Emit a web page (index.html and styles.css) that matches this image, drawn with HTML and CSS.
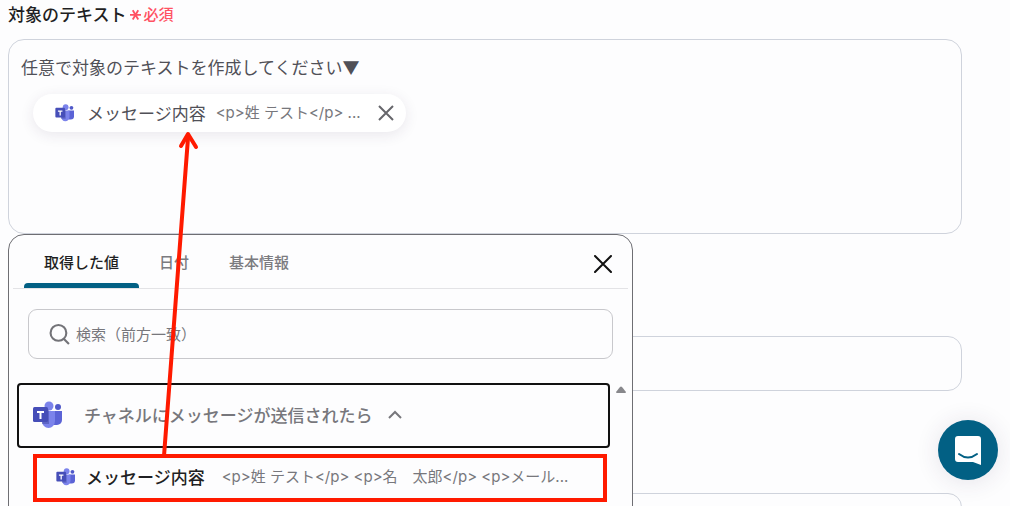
FILE: index.html
```html
<!DOCTYPE html>
<html lang="ja">
<head>
<meta charset="UTF-8">
<meta name="viewport" content="width=device-width, initial-scale=1.0">
<title>対象のテキスト</title>
<link rel="stylesheet" href="styles.css">
</head>
<body>

<!-- Teams icon, shared by the chip and the list -->
<svg class="sprite" aria-hidden="true">
    <symbol id="teams" viewBox="0 0 30 28">
        <circle cx="25" cy="6" r="3" fill="#5059c9"/>
        <path d="M20 10h9v9a5 5 0 0 1-5 5h-4z" fill="#5b63d6"/>
        <circle cx="16" cy="5" r="4.500" fill="#7b83eb"/>
        <path d="M9 10h13v10a6.500 7 0 0 1-13 0z" fill="#7b83eb"/>
        <path d="M9 8h5a2 2 0 0 1 2 2v13h-7z" fill="#3f469f" opacity=".5"/>
        <rect x="0" y="6" width="15" height="15" rx="1.500" fill="#464eb8"/>
        <path d="M4 10h7v2H8.500v6h-2v-6H4z" fill="#fff"/>
    </symbol>
</svg>

<main class="page">
    <div class="field-label">
        <span id="targetLabel" class="label-text">対象のテキスト</span>
        <svg class="asterisk" viewBox="0 0 12 12" aria-hidden="true"><path d="M0 7h12M3 2l6 10M9 2L3 12"/></svg>
        <span class="required">必須</span>
    </div>

    <div class="editor-wrap">
        <div class="editor" contenteditable="true" role="textbox" aria-multiline="true" aria-labelledby="targetLabel" spellcheck="false">
            <div class="editor-line">任意で対象のテキストを作成してください▼</div>
            <div class="chip" contenteditable="false">
                <svg class="teams-small" aria-hidden="true"><use href="#teams"/></svg>
                <span class="chip-name">メッセージ内容</span>
                <span class="chip-value">&lt;p&gt;姓 テスト&lt;/p&gt; ...</span>
                <button class="chip-remove" type="button" aria-label="削除">
                    <svg viewBox="0 0 16 16"><path d="M1 1l14 14M15 1L1 15"/></svg>
                </button>
            </div>
        </div>

        <!-- Value picker -->
        <div class="picker">
            <div class="tabs" role="tablist">
                <button class="tab active" type="button" role="tab" aria-selected="true">取得した値</button>
                <button class="tab" type="button" role="tab" aria-selected="false">日付</button>
                <button class="tab" type="button" role="tab" aria-selected="false">基本情報</button>
                <button class="picker-close" type="button" aria-label="閉じる">
                    <svg viewBox="0 0 18 18"><path d="M1 1l16 16M17 1L1 17"/></svg>
                </button>
            </div>

            <label class="search">
                <svg viewBox="0 0 20 20" aria-hidden="true"><circle cx="9" cy="8.500" r="7.500"/><path d="M14 14l5 5"/></svg>
                <input type="text" placeholder="検索（前方一致）" aria-label="検索（前方一致）">
            </label>

            <div class="results">
                <div class="result-list">
                    <button class="group" type="button" aria-expanded="true">
                        <svg class="teams-large" aria-hidden="true"><use href="#teams"/></svg>
                        <span>チャネルにメッセージが送信されたら</span>
                        <svg class="chevron" viewBox="0 0 14 9" aria-hidden="true"><path d="M1 8l6-6 6 6"/></svg>
                    </button>
                    <button class="item highlighted" type="button">
                        <svg class="teams-small" aria-hidden="true"><use href="#teams"/></svg>
                        <span class="item-name">メッセージ内容</span>
                        <span class="item-value">&lt;p&gt;姓 テスト&lt;/p&gt; &lt;p&gt;名　太郎&lt;/p&gt; &lt;p&gt;メール...</span>
                    </button>
                </div>
                <div class="scroll-track">
                    <svg class="scroll-up" viewBox="0 0 10 8" aria-hidden="true"><path d="M4 1q1-1 2 0l4 5q0 1-1 1H1q-1 0-1-1z"/></svg>
                </div>
            </div>
        </div>

        <!-- Arrow from the list item to the chip -->
        <svg class="arrow" viewBox="0 0 60 330" aria-hidden="true">
            <path d="M14 328L38 10"/>
            <path d="M31 18L38 6l8 13"/>
        </svg>
    </div>

    <input class="text-field" type="text" aria-label="入力1">
    <input class="text-field" type="text" aria-label="入力2">
</main>

<button class="chat" type="button" aria-label="チャットを開く">
    <svg viewBox="0 0 28 32">
        <path d="M4 2h20a3 3 0 0 1 3 3v26l-8-3H4a3 3 0 0 1-3-3V5a3 3 0 0 1 3-3z" fill="#fff"/>
        <path d="M5 20q9 7 18 0" fill="none" stroke="#026084" stroke-width="2" stroke-linecap="round"/>
    </svg>
</button>

</body>
</html>
```
FILE: styles.css
```css
* {
    box-sizing: border-box;
}

body {
    margin: 0;
    background-color: #fdfdfe;
    color: #1f1f23;
    font-family: "Noto Sans CJK JP", "Noto Sans", sans-serif;
    font-size: 15px;
    line-height: 24px;
}

button,
input {
    font: inherit;
    color: inherit;
}

button {
    padding: 0;
    border: none;
    background: none;
    cursor: pointer;
}

svg {
    flex: none;
}

.sprite {
    position: absolute;
    width: 0;
    height: 0;
}

.page {
    height: 100vh;
    overflow: hidden;
    padding: 2px 48px 0 8px;
}

/* Label */
.field-label {
    display: flex;
    align-items: center;
    gap: 3px;
    height: 24px;
    margin-bottom: 13px;
}

.label-text {
    font-size: 17px;
    font-weight: 500;
}

.asterisk {
    width: 11px;
    height: 12px;
    fill: none;
    stroke: #ff5263;
    stroke-width: 2;
}

.required {
    color: #ff5263;
    font-weight: 500;
}

/* Editor */
.editor-wrap {
    position: relative;
    margin-bottom: 102px;
}

.editor {
    min-height: 195px;
    padding: 15px 12px;
    border: 1px solid #cfd3dc;
    border-radius: 16px;
    color: #505057;
    font-size: 17px;
    outline: none;
}

.chip {
    display: inline-flex;
    align-items: center;
    height: 38px;
    margin: 15px 12px;
    padding: 0 12px 0 22px;
    border-radius: 19px;
    background-color: #fff;
    box-shadow: 0 3px 14px rgba(60, 40, 80, 0.1);
}

.teams-small {
    width: 20px;
    height: 18px;
}

.chip-name {
    margin: 0 10px 0 12px;
}

.chip-value {
    color: #77777c;
    font-family: Inter, "Noto Sans CJK JP", sans-serif;
    font-size: 15px;
}

.chip-remove {
    display: flex;
    margin-left: 17px;
}

.chip-remove svg {
    width: 16px;
    height: 16px;
    fill: none;
    stroke: #66666b;
    stroke-width: 2;
}

/* Picker */
.picker {
    position: absolute;
    top: 195px;
    left: 0;
    width: 625px;
    height: 400px;
    border: 1px solid #6e6e73;
    border-radius: 16px;
    background-color: #fdfdfe;
}

.tabs {
    display: flex;
    height: 54px;
    margin: 0 4px;
    padding: 0 16px 0 11px;
    border-bottom: 1px solid #e3e3e6;
}

.tab {
    position: relative;
    padding: 0 20px;
    color: #7b7b80;
    font-weight: 500;
}

.tab.active {
    color: #1f1f23;
}

.tab.active::after {
    content: "";
    position: absolute;
    right: 0;
    bottom: 0;
    left: 0;
    height: 5px;
    border-radius: 4px 4px 0 0;
    background-color: #026084;
}

.picker-close {
    display: flex;
    align-items: center;
    margin-left: auto;
    padding-top: 5px;
}

.picker-close svg {
    width: 18px;
    height: 18px;
    fill: none;
    stroke: #111;
    stroke-width: 2;
    stroke-linecap: round;
}

.search {
    display: flex;
    align-items: center;
    gap: 6px;
    height: 50px;
    margin: 20px 19px 24px;
    padding: 0 20px;
    border: 1px solid #c8c8cc;
    border-radius: 9px;
}

.search svg {
    width: 21px;
    height: 21px;
    fill: none;
    stroke: #737378;
    stroke-width: 2;
}

.search input {
    flex: 1;
    padding: 0;
    border: none;
    background: none;
    outline: none;
}

.search input::placeholder {
    color: #77777c;
    opacity: 1;
}

.results {
    display: flex;
    padding-left: 8px;
}

.result-list {
    flex: 1;
}

.group {
    display: flex;
    align-items: center;
    width: 100%;
    height: 65px;
    padding: 0 14px 2px;
    border: 2px solid #111;
    border-radius: 4px;
    color: #77777c;
    font-size: 17px;
    font-weight: 500;
}

.teams-large {
    width: 30px;
    height: 28px;
    margin-right: 21px;
}

.chevron {
    width: 14px;
    height: 9px;
    margin-left: 15px;
    fill: none;
    stroke: #77777c;
    stroke-width: 2;
}

.item {
    display: flex;
    align-items: center;
    height: 48px;
    margin: 6px 3px 0 16px;
    padding: 0 19px 2px;
    width: calc(100% - 19px);
}

.item.highlighted {
    border: 4px solid #ff1a00;
}

.item-name {
    margin: 0 17px 0 10px;
    font-size: 17px;
    font-weight: 500;
}

.item-value {
    color: #77777c;
    font-family: Inter, "Noto Sans CJK JP", sans-serif;
}

.scroll-track {
    width: 22px;
    padding: 3px 6px;
}

.scroll-up {
    display: block;
    width: 10px;
    height: 8px;
    fill: #88888c;
}

.arrow {
    position: absolute;
    top: 89px;
    left: 142px;
    width: 60px;
    height: 330px;
    fill: none;
    stroke: #ff1a00;
    stroke-width: 4;
    stroke-linecap: round;
    stroke-linejoin: round;
    pointer-events: none;
}

.text-field {
    display: block;
    width: 100%;
    height: 55px;
    margin-bottom: 102px;
    padding: 0 12px;
    border: 1px solid #cfd3dc;
    border-radius: 14px;
    background-color: #fdfdfe;
}

/* Chat button */
.chat {
    position: fixed;
    right: 12px;
    bottom: 26px;
    display: flex;
    align-items: center;
    justify-content: center;
    width: 60px;
    height: 60px;
    border-radius: 50%;
    background-color: #026084;
    box-shadow: 0 2px 24px rgba(60, 40, 80, 0.12);
}

.chat svg {
    width: 28px;
    height: 32px;
}
```
